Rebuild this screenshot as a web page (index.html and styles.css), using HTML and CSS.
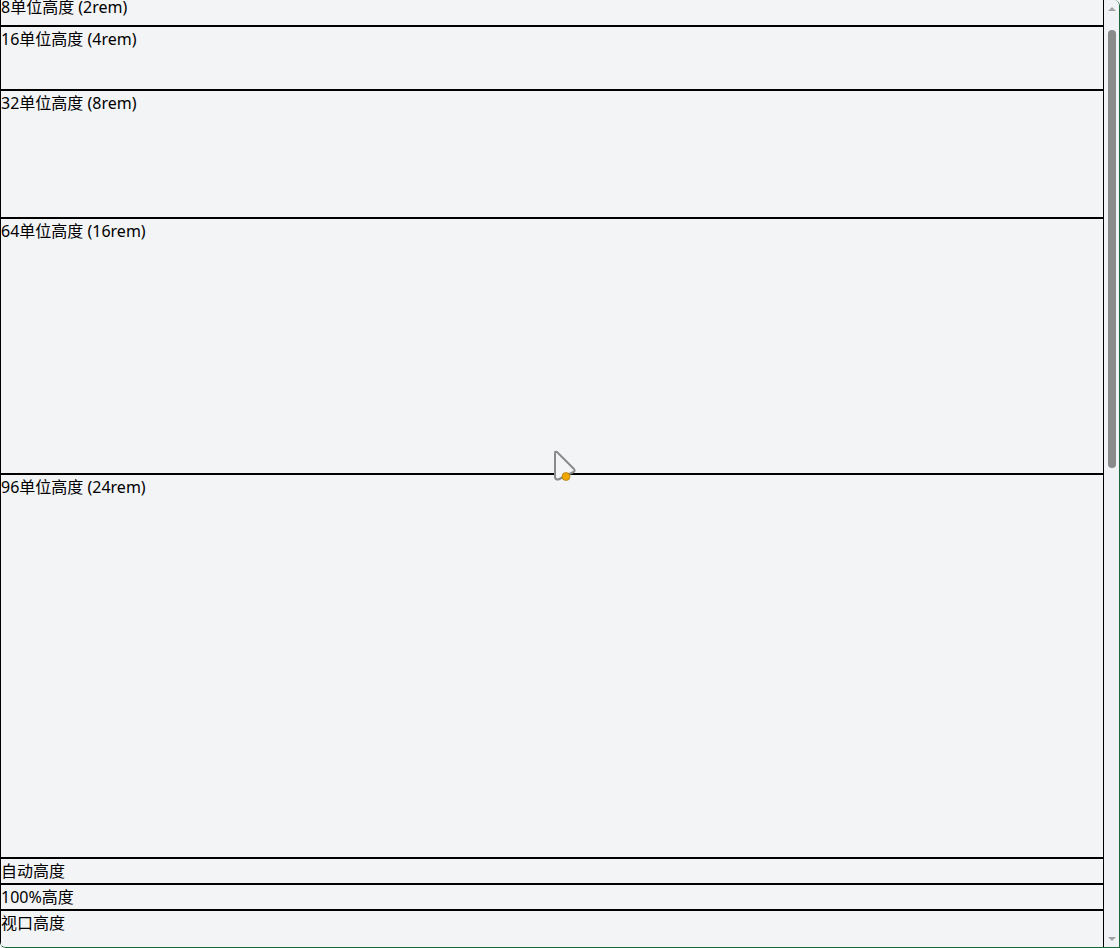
FILE: index.html
```html
<!DOCTYPE html>
<html lang="zh-CN">
<head>
<meta charset="utf-8">
<title>高度示例</title>
<link rel="stylesheet" href="styles.css">
</head>
<body>
<div class="frame">
  <main class="page">
    <div class="stack">
      <div class="box h-8">8单位高度 (2rem)</div>
      <div class="box h-16">16单位高度 (4rem)</div>
      <div class="box h-32">32单位高度 (8rem)</div>
      <div class="box h-64">64单位高度 (16rem)</div>
      <div class="box h-96">96单位高度 (24rem)</div>
      <div class="box">自动高度</div>
      <div class="box">100%高度</div>
      <div class="box h-screen">视口高度</div>
    </div>
  </main>
  <div class="scrollbar">
    <div class="sb-btn"><span class="arrow-up"></span></div>
    <div class="sb-track"><div class="sb-thumb"></div></div>
    <div class="sb-btn"><span class="arrow-down"></span></div>
  </div>
  <svg class="cursor" width="26" height="34" viewBox="0 0 26 34">
    <path d="M3 4 Q3 2 5 3 L22 20 Q23.5 22 21.5 23 L13 27 L7.5 30 Q3.5 31.5 3 28 Z" fill="#f3f4f6" stroke="#8a8a8a" stroke-width="2" stroke-linejoin="round"/>
    <circle cx="14" cy="27.5" r="4" fill="#f0a800" stroke="#9a6a00" stroke-width="0.6"/>
  </svg>
</div>
</body>
</html>
```
FILE: styles.css
```css
html, body {
  margin: 0;
  padding: 0;
  height: 100%;
  overflow: hidden;
  background: #f3f4f6;
}

.frame {
  position: relative;
  display: flex;
  height: 948px;
  width: 1120px;
  box-sizing: border-box;
  border-right: 1px solid #17683a;
  border-bottom: 1px solid #17683a;
  border-top-right-radius: 6px;
  border-bottom-left-radius: 6px;
  overflow: hidden;
  background: #f3f4f6;
}

.page {
  width: 1104px;
  flex: none;
  overflow: hidden;
  font-family: "Noto Sans", "Noto Sans CJK SC", sans-serif;
  font-size: 16px;
  line-height: 24px;
  color: #000;
}

.stack {
  margin-top: -6px;
}

.box {
  border: 1px solid #000;
  box-sizing: border-box;
  background: #f3f4f6;
}

.h-8 { height: 32px; }
.h-16 { height: 64px; }
.h-32 { height: 128px; }
.h-64 { height: 256px; }
.h-96 { height: 384px; }
.h-screen { height: 948px; }

.scrollbar {
  flex: 1;
  display: flex;
  flex-direction: column;
  background: #f1f2f5;
}

.sb-btn {
  height: 17px;
  display: flex;
  align-items: center;
  justify-content: center;
  flex: none;
}

.arrow-up {
  width: 0;
  height: 0;
  border-left: 4px solid transparent;
  border-right: 4px solid transparent;
  border-bottom: 4px solid #a3a3a3;
}

.arrow-down {
  width: 0;
  height: 0;
  border-left: 4px solid transparent;
  border-right: 4px solid transparent;
  border-top: 4px solid #a3a3a3;
}

.sb-track {
  flex: 1;
  padding-top: 13px;
  display: flex;
  justify-content: center;
}

.sb-thumb {
  width: 8px;
  height: 438px;
  border-radius: 4px;
  background: #8a8a8a;
}

.cursor {
  position: absolute;
  left: 552px;
  top: 449px;
}
```
